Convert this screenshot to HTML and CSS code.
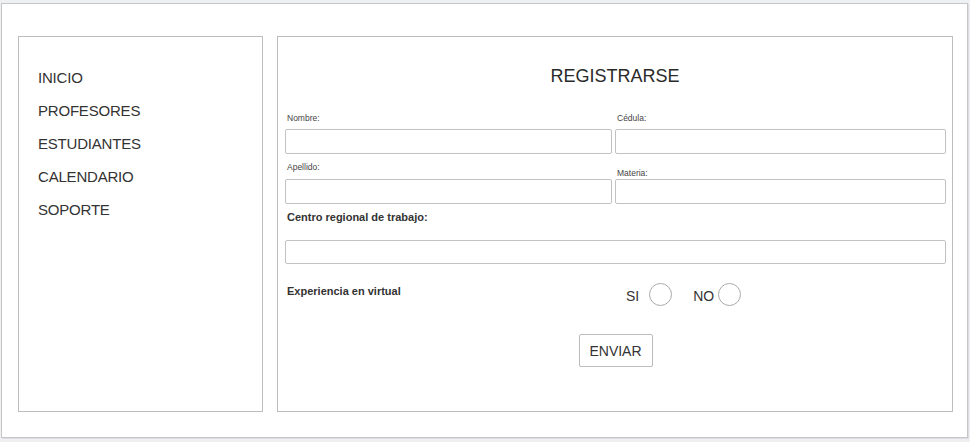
FILE: index.html
```html
<!DOCTYPE html>
<html lang="es">
<head>
<meta charset="utf-8">
<title>Registrarse</title>
<link rel="stylesheet" href="styles.css">
</head>
<body>
<div class="frame">
  <nav class="sidebar">
    <ul class="nav">
      <li>INICIO</li>
      <li>PROFESORES</li>
      <li>ESTUDIANTES</li>
      <li>CALENDARIO</li>
      <li>SOPORTE</li>
    </ul>
  </nav>
  <main class="main">
    <h1 class="title">REGISTRARSE</h1>
    <form class="form">
      <div class="grid row-one">
        <div class="field">
          <label class="small">Nombre:</label>
          <input class="text" type="text">
        </div>
        <div class="field">
          <label class="small">Cédula:</label>
          <input class="text" type="text">
        </div>
      </div>
      <div class="grid row-two">
        <div class="field">
          <label class="small small-b">Apellido:</label>
          <input class="text" type="text">
        </div>
        <div class="field">
          <label class="small small-low">Materia:</label>
          <input class="text" type="text">
        </div>
      </div>
      <label class="bold centro">Centro regional de trabajo:</label>
      <input class="text wide" type="text">
      <div class="grid radio-row">
        <div class="bold exp">Experiencia en virtual</div>
        <div class="choices">
          <span class="opt">SI</span>
          <input class="radio" type="radio" name="exp">
          <span class="opt opt-no">NO</span>
          <input class="radio radio-no" type="radio" name="exp">
        </div>
      </div>
      <div class="actions">
        <button class="send" type="button">ENVIAR</button>
      </div>
    </form>
  </main>
</div>
</body>
</html>
```
FILE: styles.css
```css
* { box-sizing: border-box; }
html, body { margin: 0; padding: 0; }
body {
  background: #eef0f2;
  font-family: "Liberation Sans", Arial, sans-serif;
  color: #333;
  padding: 3px 0 0 1px;
  width: 970px;
  height: 442px;
  overflow: hidden;
}
.frame {
  width: 967px;
  height: 435px;
  background: #fff;
  border: 1px solid #c6c6c8;
  box-shadow: 1px 1px 0 #dcdde0;
  padding: 32px 14px 25px 16px;
  display: flex;
  gap: 14px;
}
.sidebar {
  width: 245px;
  flex: none;
  border: 1px solid #bdbdbd;
}
.nav {
  list-style: none;
  margin: 0;
  padding: 24px 0 0 19px;
}
.nav li {
  font-size: 15px;
  line-height: 33px;
  color: #333;
  letter-spacing: -0.2px;
}
.main {
  flex: 1;
  border: 1px solid #bdbdbd;
}
.title {
  margin: 29px 0 0;
  font-size: 18px;
  line-height: 20px;
  font-weight: normal;
  text-align: center;
  color: #2a2a2a;
}
.form {
  padding: 0 6px 0 7px;
}
.grid {
  display: grid;
  grid-template-columns: 327px 1fr;
  column-gap: 3px;
}
.row-one { margin-top: 27px; }
.row-two { margin-top: 8px; }
.field { display: flex; flex-direction: column; }
.small {
  display: block;
  font-size: 8.5px;
  line-height: 10px;
  color: #444;
  margin: 0 0 6px 2px;
}
.small-b { margin-bottom: 7px; }
.small-low { margin-top: 6px; margin-bottom: 1px; }
.text {
  display: block;
  width: 100%;
  height: 25px;
  margin: 0;
  padding: 0 6px;
  border: 1px solid #c2c2c2;
  border-radius: 2px;
  background: #fff;
  font: inherit;
  outline: none;
}
.bold {
  display: block;
  font-size: 11px;
  line-height: 13px;
  font-weight: bold;
  color: #333;
  margin-left: 2px;
}
.centro { margin-top: 7px; }
.wide { margin-top: 16px; height: 24px; }
.radio-row { margin-top: 18px; height: 24px; }
.exp { padding-top: 3px; }
.choices {
  display: flex;
  align-items: center;
  padding-left: 11px;
}
.opt {
  font-size: 14px;
  line-height: 16px;
  color: #333;
  margin-top: 3px;
}
.opt-no { margin-left: 21px; }
.radio {
  appearance: none;
  -webkit-appearance: none;
  width: 23px;
  height: 23px;
  margin: 0 0 0 10px;
  border: 1px solid #aaa;
  border-radius: 50%;
  background: #fff;
}
.radio-no { margin-left: 4px; }
.actions {
  display: flex;
  justify-content: center;
  margin-top: 28px;
}
.send {
  width: 74px;
  height: 33px;
  border: 1px solid #bdbdbd;
  border-radius: 2px;
  background: #fff;
  font-family: "Liberation Sans", Arial, sans-serif;
  font-size: 14px;
  color: #333;
  padding: 0;
}
```
